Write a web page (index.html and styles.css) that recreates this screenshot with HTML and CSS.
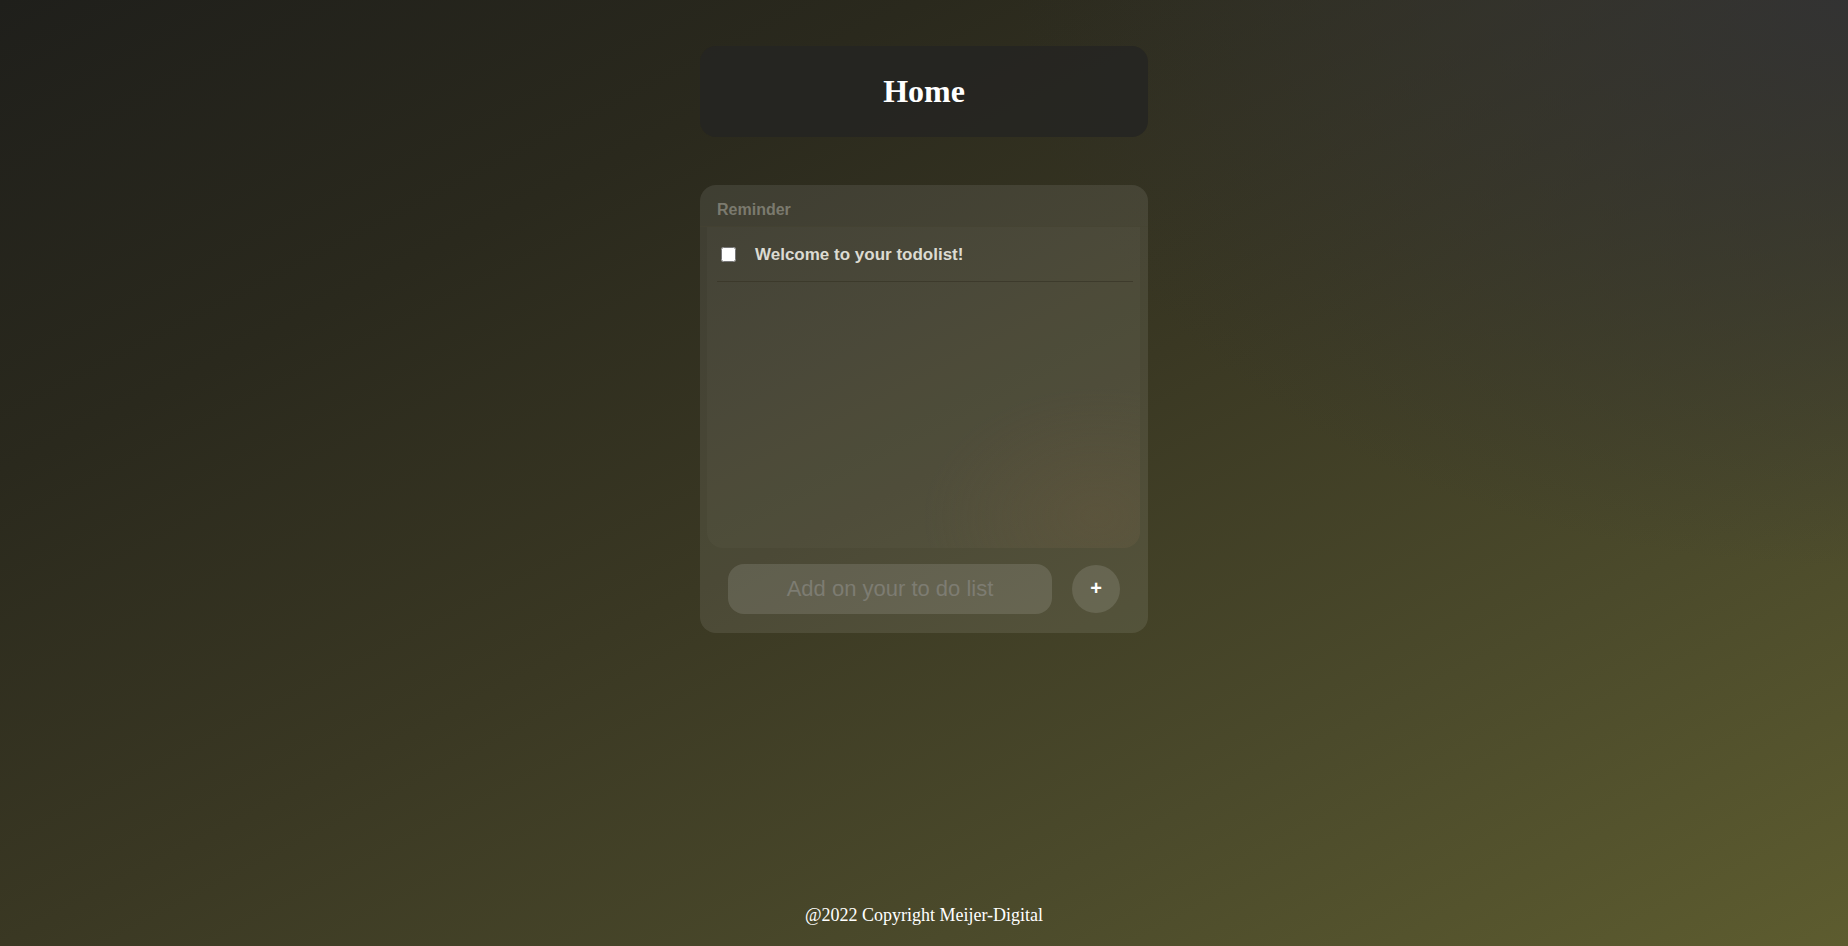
FILE: index.html
```html
<!DOCTYPE html>
<html lang="en">
<head>
<meta charset="utf-8">
<title>Todo</title>
<link rel="stylesheet" href="styles.css">
</head>
<body>
<main class="page">
  <header class="title-box">
    <h1 class="title">Home</h1>
  </header>
  <section class="card">
    <div class="card-head">Reminder</div>
    <div class="list">
      <label class="item">
        <input type="checkbox" class="check">
        <span class="item-text">Welcome to your todolist!</span>
      </label>
    </div>
    <form class="add-form">
      <input class="add-input" type="text" placeholder="Add on your to do list">
      <button class="add-btn" type="button">+</button>
    </form>
  </section>
  <footer class="footer">@2022 Copyright Meijer-Digital</footer>
</main>
</body>
</html>
```

FILE: styles.css
```css
html, body {
  margin: 0;
  padding: 0;
  height: 100%;
}
body {
  background:
    radial-gradient(ellipse 45% 60% at 100% 0%, rgba(50, 50, 52, 0.9), rgba(50, 50, 52, 0) 100%),
    linear-gradient(to bottom right, #1f1f1b 0%, #2a291d 25%, #3a3823 50%, #4b4a2b 75%, #5d5c2f 100%);
  font-family: "Liberation Serif", "Times New Roman", serif;
}
.page {
  min-height: 100vh;
  display: flex;
  flex-direction: column;
  align-items: center;
  box-sizing: border-box;
  padding-top: 46px;
}
.title-box {
  width: 448px;
  height: 91px;
  border-radius: 16px;
  background: rgba(36, 36, 34, 0.85);
  display: flex;
  align-items: center;
  justify-content: center;
}
.title {
  margin: 0;
  font-size: 32px;
  font-weight: bold;
  color: #ffffff;
  font-family: "Liberation Serif", "Times New Roman", serif;
}
.card {
  margin-top: 48px;
  width: 448px;
  height: 448px;
  border-radius: 16px;
  background: rgba(255, 255, 255, 0.09);
  display: flex;
  flex-direction: column;
  box-sizing: border-box;
  font-family: "Liberation Sans", Arial, sans-serif;
}
.card-head {
  height: 42px;
  box-sizing: border-box;
  padding: 16px 0 0 17px;
  font-size: 16px;
  font-weight: bold;
  color: #7b7a6e;
  line-height: 18px;
  border-bottom: 1px solid rgba(70, 68, 50, 0.5);
}
.list {
  margin: 0 8px 0 7px;
  height: 321px;
  border-radius: 0 0 16px 16px;
  background:
    radial-gradient(ellipse 40% 40% at 90% 90%, rgba(110, 90, 60, 0.28), rgba(110, 90, 60, 0) 100%),
    rgba(255, 255, 255, 0.025);
  display: flex;
  flex-direction: column;
}
.item {
  display: flex;
  align-items: center;
  height: 55px;
  margin: 0 7px 0 10px;
  box-sizing: border-box;
  border-bottom: 1px solid rgba(55, 53, 38, 0.7);
}
.check {
  width: 15px;
  height: 15px;
  margin: 1px 0 0 4px;
}
.item-text {
  margin-left: 19px;
  padding-top: 2px;
  font-size: 17px;
  font-weight: bold;
  color: #dcdbd2;
}
.add-form {
  display: flex;
  align-items: center;
  margin: 16px 0 0 28px;
}
.add-input {
  width: 324px;
  height: 50px;
  box-sizing: border-box;
  border: none;
  outline: none;
  border-radius: 16px;
  background: rgba(255, 255, 255, 0.12);
  font-family: "Liberation Sans", Arial, sans-serif;
  font-size: 22px;
  text-align: center;
  color: #dddddd;
  padding: 0;
}
.add-input::placeholder {
  color: #7d7c72;
}
.add-btn {
  margin-left: 20px;
  width: 48px;
  height: 48px;
  border-radius: 50%;
  border: none;
  background: rgba(255, 255, 255, 0.12);
  color: #ffffff;
  font-family: "Liberation Sans", Arial, sans-serif;
  font-size: 20px;
  font-weight: bold;
  padding: 0 0 2px 0;
  line-height: 1;
}
.footer {
  margin-top: auto;
  padding-bottom: 20px;
  font-size: 18px;
  color: #ffffff;
  font-family: "Liberation Serif", "Times New Roman", serif;
}
```
